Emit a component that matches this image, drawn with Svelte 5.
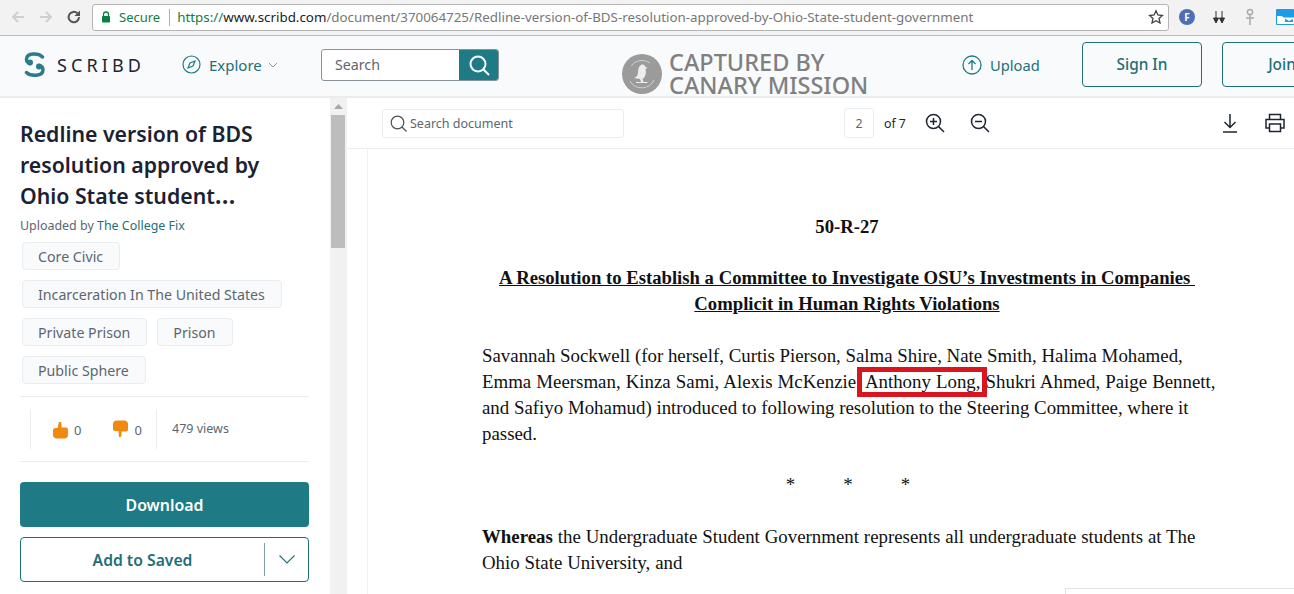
<script>
  const tagRows = [["Core Civic"], ["Incarceration In The United States"], ["Private Prison", "Prison"], ["Public Sphere"]];
</script>

<div class="screen">
  <div class="chrome">
    <svg class="nav" width="16" height="16" viewBox="0 0 16 16"><path d="M14 8H3M8 3L3 8l5 5" fill="none" stroke="#cfcfcf" stroke-width="2"/></svg>
    <svg class="nav" width="16" height="16" viewBox="0 0 16 16"><path d="M2 8h11M8 3l5 5-5 5" fill="none" stroke="#cfcfcf" stroke-width="2"/></svg>
    <svg class="nav" width="16" height="16" viewBox="0 0 16 16"><path d="M13 8a5.2 5.2 0 1 1-1.6-3.7" fill="none" stroke="#555" stroke-width="2"/><path d="M14 1.5V7H8.5z" fill="#555"/></svg>
    <div class="omni">
      <svg width="10" height="12" viewBox="0 0 10 12"><path d="M2.5 5V3.5a2.5 2.5 0 0 1 5 0V5" fill="none" stroke="#0b8043" stroke-width="1.3"/><rect x="1" y="5" width="8" height="6.5" rx=".8" fill="#0b8043"/></svg>
      <span class="secure">Secure</span>
      <span class="omni-sep"></span>
      <span class="url"><span class="https">https://</span><span class="host">www.scribd.com</span>/document/370064725/Redline-version-of-BDS-resolution-approved-by-Ohio-State-student-government</span>
      <svg class="star" width="16" height="16" viewBox="0 0 16 16"><path d="M8 1.8l1.900 4.200 4.500.5-3.400 3 1 4.500L8 11.700 4 14l1-4.500-3.400-3 4.500-.5z" fill="none" stroke="#444" stroke-width="1.3"/></svg>
    </div>
    <div class="ext">
      <span class="ext-f">F</span>
      <svg width="14" height="14" viewBox="0 0 14 14"><path d="M4 1v8M1.500 8L4 13l2.500-5zM10 1v8M7.500 8L10 13l2.500-5z" fill="#333" stroke="#333"/></svg>
      <svg width="12" height="18" viewBox="0 0 12 18"><circle cx="6" cy="4" r="2.600" fill="none" stroke="#aaa" stroke-width="1.500"/><path d="M6 7v10M2 10h8" stroke="#aaa" stroke-width="1.500"/></svg>
      <svg width="18" height="16" viewBox="0 0 18 16"><rect width="18" height="16" rx="1" fill="#1e9be6"/><path d="M1 7h5l1.500 1.500H18V15H1z" fill="#fff"/><path d="M9 9.500l4 2.500 4-2v3H9z" fill="#1e9be6"/></svg>
    </div>
  </div>

  <header class="topbar">
    <svg class="logo" width="21" height="25" viewBox="0 0 21 25"><g fill="none" stroke="#2a7d88" stroke-width="3.400" stroke-linecap="round"><path d="M18.500 5C14.500 1 3 .5 2.500 7c-.2 2.500 1.500 4 3.500 4.500"/><path d="M2.500 20.500C6.500 24.500 19 24.500 19 18c0-2.500-1.500-4-4-4.500"/></g><circle cx="6" cy="10.500" r="3" fill="#2a7d88"/><circle cx="15" cy="14.500" r="3" fill="#2a7d88"/></svg>
    <span class="wordmark">SCRIBD</span>
    <svg class="compass" width="19" height="19" viewBox="0 0 19 19"><circle cx="9.500" cy="9.500" r="8.500" fill="none" stroke="#1e7b85" stroke-width="1.200"/><path d="M13 6l-2 5-5 2 2-5z" fill="none" stroke="#1e7b85" stroke-width="1.200"/></svg>
    <span class="explore">Explore</span>
    <svg class="chev" width="10" height="6" viewBox="0 0 10 6"><path d="M1 1l4 4 4-4" fill="none" stroke="#8a9aa0"/></svg>
    <div class="search">
      <span class="search-field">Search</span>
      <span class="search-btn"><svg width="22" height="22" viewBox="0 0 22 22"><circle cx="10" cy="10" r="7.500" fill="none" stroke="#fff" stroke-width="2"/><path d="M15.500 15.500L21 21" stroke="#fff" stroke-width="2"/></svg></span>
    </div>
    <div class="canary">
      <svg width="40" height="40" viewBox="0 0 40 40"><circle cx="20" cy="20" r="20" fill="#9b9b9b"/><path d="M32 26a13.500 13.500 0 0 1-24 1M9 12a13.500 13.500 0 0 1 19-3" fill="none" stroke="#d0d0d0"/><path d="M19 11c2-1 4 0 4.500 2l2 1-2 1c1 4 0 8-3 10l1 3h4v1H14v-1h5l-1-3-6-1c3-1 4-3 4-6 0-3 1-6 3-7z" fill="#ececec"/></svg>
      <span class="canary-text">CAPTURED BY<br />CANARY MISSION</span>
    </div>
    <svg class="up" width="20" height="20" viewBox="0 0 20 20"><circle cx="10" cy="10" r="9" fill="none" stroke="#1e7b85" stroke-width="1.300"/><path d="M10 15V5.500M6.500 9L10 5.500 13.500 9" fill="none" stroke="#1e7b85" stroke-width="1.300"/></svg>
    <span class="upload">Upload</span>
    <span class="hbtn signin">Sign In</span>
    <span class="hbtn join">Join</span>
  </header>

  <div class="main">
    <aside class="side">
      <h1>Redline version of BDS resolution approved by Ohio State student<span class="ell">…</span></h1>
      <p class="by">Uploaded by <span class="author">The College Fix</span></p>
      <div class="tags">
        {#each tagRows as row}
          <div class="tag-row">
            {#each row as tag}<span class="tag">{tag}</span>{/each}
          </div>
        {/each}
      </div>
      <div class="stats">
        <div class="votes">
          <svg width="16" height="18" viewBox="0 0 16 18"><path d="M1 9c0-1 1-2 2-2h2.500L7 1c1.500-.5 2.500.5 2.500 2v3.500H14c1.500 0 2 1 2 2.500v5c0 2-1.500 3.500-3.500 3.500H5C2.500 17.500 1 16 1 14z" fill="#f0890f"/></svg>
          <span class="num">0</span>
          <svg class="down" width="16" height="18" viewBox="0 0 16 18"><path d="M1 9c0 1 1 2 2 2h3.500L7 17c1.500.5 2.500-.5 2.500-2v-3.500H14c1.500 0 2-1 2-2.500V4C16 2 14.500.5 12.500.5H5C2.500.5 1 2 1 4z" fill="#f0890f"/></svg>
          <span class="num">0</span>
        </div>
        <span class="views">479 views</span>
      </div>
      <div class="download">Download</div>
      <div class="saved">
        <span class="saved-label">Add to Saved</span>
        <span class="saved-chev"><svg width="16" height="9" viewBox="0 0 16 9"><path d="M.500.500L8 8l7.500-7.500" fill="none" stroke="#1e6f78" stroke-width="1.100"/></svg></span>
      </div>
    </aside>

    <div class="scrollbar">
      <svg class="arrow" width="9" height="5" viewBox="0 0 9 5"><path d="M4.500 0L9 5H0z" fill="#a8a8a8"/></svg>
      <span class="thumb"></span>
    </div>

    <section class="viewer">
      <div class="toolbar">
        <div class="doc-search">
          <svg width="17" height="17" viewBox="0 0 17 17"><circle cx="7.500" cy="7.500" r="6.300" fill="none" stroke="#4a5058" stroke-width="1.200"/><path d="M12 12l4.500 4.500" stroke="#4a5058" stroke-width="1.200"/></svg>
          <span>Search document</span>
        </div>
        <span class="page-input">2</span>
        <span class="of">of 7</span>
        <svg class="zoom-in" width="20" height="20" viewBox="0 0 20 20"><circle cx="8.500" cy="8.500" r="7" fill="none" stroke="#1e2430" stroke-width="1.500"/><path d="M13.500 13.500L19 19M5 8.500h7M8.500 5v7" stroke="#1e2430" stroke-width="1.500"/></svg>
        <svg class="zoom-out" width="20" height="20" viewBox="0 0 20 20"><circle cx="8.500" cy="8.500" r="7" fill="none" stroke="#1e2430" stroke-width="1.500"/><path d="M13.500 13.500L19 19M5 8.500h7" stroke="#1e2430" stroke-width="1.500"/></svg>
        <svg class="dl" width="16" height="20" viewBox="0 0 16 20"><path d="M8 1v13M2.500 9L8 14.500 13.500 9M1 19h14" fill="none" stroke="#1e2430" stroke-width="1.500"/></svg>
        <svg class="print" width="20" height="20" viewBox="0 0 20 20"><path d="M4.500 6V1.500h11V6M4.500 15H1V6.500h18V15h-3.500" fill="none" stroke="#1e2430" stroke-width="1.500"/><rect x="4.500" y="11" width="11" height="7.500" fill="none" stroke="#1e2430" stroke-width="1.500"/></svg>
      </div>
      <div class="pagewrap">
        <article class="page">
          <p class="code">50-R-27</p>
          <p class="res-title"><u>A Resolution to Establish a Committee to Investigate OSU’s Investments in Companies&nbsp;</u><br /><u>Complicit in Human Rights Violations</u></p>
          <p class="body">Savannah Sockwell (for herself, Curtis Pierson, Salma Shire, Nate Smith, Halima Mohamed,<br /><span class="wider">Emma Meersman, Kinza Sami, Alexis McKenzie. <span class="mark">Anthony Long,</span> Shukri Ahmed, Paige Bennett,</span><br />and Safiyo Mohamud) introduced to following resolution to the Steering Committee, where it<br />passed.</p>
          <p class="stars"><span>*</span><span>*</span><span>*</span></p>
          <p class="body whereas"><b>Whereas</b> the Undergraduate Student Government represents all undergraduate students at The<br />Ohio State University, and</p>
        </article>
        <span class="corner"></span>
      </div>
    </section>
  </div>
</div>

<style>
  :global(body) { margin: 0; background: #fff; }
  .screen {
    width: 1294px; height: 594px; overflow: hidden; display: flex; flex-direction: column;
    font-family: "Noto Sans", sans-serif; color: #1e2430;
  }
  .chrome {
    flex: none; height: 36px; box-sizing: border-box; display: flex; align-items: center;
    padding: 0 0 1px 10px; background: #f2f2f2; border-bottom: 1px solid #bdbdbd;
  }
  .chrome > svg { flex: none; }
  .chrome .nav { margin-right: 12px; }
  .chrome .nav:nth-child(3) { margin-right: 10px; }
  .omni {
    flex: none; width: 1077px; height: 27px; box-sizing: border-box; display: flex; align-items: center;
    padding: 0 4px 0 8px; background: #fff; border: 1px solid #b5b5b5; border-radius: 3px;
  }
  .secure { margin-left: 8px; font-size: 13px; color: #0b8043; }
  .omni-sep { width: 1px; height: 17px; margin: 0 7px 0 9px; background: #b0b0b0; }
  .url { flex: 1; font-size: 13.350px; color: #777; white-space: nowrap; overflow: hidden; }
  .https { color: #0b8043; }
  .host { color: #222; }
  .ext { flex: none; display: flex; align-items: center; margin-left: 10px; }
  .ext > * { flex: none; }
  .ext-f {
    width: 16px; height: 16px; border-radius: 50%; background: #4f6fb5; color: #fff; font-size: 10px; font-weight: 700;
    display: flex; align-items: center; justify-content: center;
  }
  .ext svg:nth-child(2) { margin-left: 17px; }
  .ext svg:nth-child(3) { margin-left: 18px; }
  .ext svg:nth-child(4) { margin-left: 20px; }

  .topbar {
    flex: none; height: 62px; box-sizing: border-box; display: flex; align-items: center;
    padding: 0 0 3px 24px; background: #f8fafb; border-bottom: 2px solid #e9edf0;
  }
  .topbar > * { flex: none; }
  .wordmark { margin-left: 12px; font-size: 18px; letter-spacing: 4.100px; color: #1e2430; width: 115px; }
  .compass { margin-left: 10px; }
  .explore { margin-left: 8px; font-size: 15px; color: #1e6f78; width: 59px; }
  .search {
    margin-left: 43px; width: 178px; height: 32px; box-sizing: border-box; display: flex;
    border: 1px solid #8a9299; border-radius: 3px; background: #fff; overflow: hidden;
  }
  .search-field { flex: 1; padding: 0 0 0 13px; line-height: 30px; font-size: 14.200px; color: #5d6670; }
  .search-btn { width: 39px; background: #1e7b85; display: flex; align-items: center; justify-content: center; }
  .canary { margin-left: 123px; margin-top: 19px; display: flex; align-items: center; height: 48px; }
  .canary-text { margin-left: 7px; font-size: 23.500px; line-height: 23.500px; font-weight: 500; color: #808080; white-space: nowrap; width: 293px; }
  .upload { margin-left: 8px; font-size: 14.700px; color: #1e6f78; width: 92px; }
  .hbtn {
    width: 120px; height: 45px; box-sizing: border-box; border: 1px solid #1e6f78; border-radius: 4px;
    display: flex; align-items: center; justify-content: center; font-size: 15.400px; font-weight: 500; color: #1e6f78;
  }
  .join { margin-left: 20px; }

  .main { flex: 1; min-height: 0; display: flex; }
  .side { flex: none; width: 330px; box-sizing: border-box; padding: 20px 21px 0 20px; }
  h1 { margin: 0; font-size: 21.250px; line-height: 31px; font-weight: 600; color: #1a2233; }
  .ell { font-size: 25px; line-height: 0; }
  .by { margin: 6px 0 0; font-size: 12.450px; line-height: 18px; color: #5d6670; }
  .author { color: #1e6f78; }
  .tags { margin: 7px 0 0 2px; display: flex; flex-direction: column; gap: 10px; }
  .tag-row { display: flex; gap: 10px; }
  .tag {
    height: 28px; box-sizing: border-box; padding: 0 16px 0 15px; display: flex; align-items: center;
    border: 1px solid #e9edf0; border-radius: 4px; background: #f8fafb; font-size: 14.200px; color: #5d6670;
  }
  .stats {
    margin-top: 12px; height: 66px; box-sizing: border-box; display: flex; align-items: center; padding-left: 10px;
    border-top: 1px solid #e9edf0; border-bottom: 1px solid #e9edf0;
  }
  .votes {
    width: 127px; height: 40px; box-sizing: border-box; display: flex; align-items: center; padding: 1px 0 0 21px;
    border-left: 1px solid #e9edf0; border-right: 1px solid #e9edf0;
  }
  .num { margin-left: 6px; font-size: 13px; color: #5d6670; }
  .down { margin-left: 31px; margin-top: -1px; }
  .views { margin-left: 15px; margin-bottom: 2px; font-size: 12.500px; color: #5d6670; }
  .download {
    margin-top: 20px; height: 45px; display: flex; align-items: center; justify-content: center; border-radius: 4px;
    background: #1e7b85; color: #fff; font-size: 15.900px; font-weight: 600;
  }
  .saved {
    margin-top: 10px; height: 45px; box-sizing: border-box; display: flex; align-items: center;
    border: 1px solid #1e6f78; border-radius: 4px; color: #1e6f78;
  }
  .saved-label { flex: 1; text-align: center; font-size: 15.700px; font-weight: 600; }
  .saved-chev { width: 43px; height: 33px; display: flex; align-items: center; justify-content: center; border-left: 1px solid #7e9ea3; }

  .scrollbar { flex: none; width: 17px; background: #f1f1f1; display: flex; flex-direction: column; align-items: center; border-right: 1px solid #eef0f1; box-sizing: border-box; }
  .arrow { margin-top: 6px; }
  .thumb { width: 14px; height: 133px; margin-top: 6px; background: #bdbdbd; }

  .viewer { flex: 1; min-width: 0; display: flex; flex-direction: column; }
  .toolbar {
    flex: none; height: 51px; box-sizing: border-box; display: flex; align-items: center; padding-left: 35px;
    border-bottom: 1px solid #e9edf0;
  }
  .toolbar > * { flex: none; }
  .doc-search {
    width: 242px; height: 29px; box-sizing: border-box; display: flex; align-items: center; gap: 3px; padding-left: 7px;
    border: 1px solid #e9edf0; border-radius: 3px; font-size: 12.500px; color: #5d6670;
  }
  .page-input {
    margin-left: 220px; width: 30px; height: 30px; box-sizing: border-box; display: flex; align-items: center; justify-content: center;
    border: 1px solid #e9edf0; border-radius: 3px; font-size: 12.300px; color: #5d6670;
  }
  .of { margin-left: 10px; width: 41px; font-size: 12.300px; color: #1e2430; white-space: nowrap; }
  .zoom-out { margin-left: 25px; }
  .dl { margin-left: 232px; }
  .print { margin-left: 27px; }

  .pagewrap { flex: 1; min-height: 0; margin-left: 20px; border-left: 1px solid #eef0f1; position: relative; overflow: hidden; }
  .page {
    width: 730px; margin-left: 114px; padding-top: 65px;
    font-family: "Liberation Serif", serif; font-size: 18.870px; line-height: 26px; color: #111;
  }
  .page p { margin: 0; white-space: nowrap; }
  .code { text-align: center; font-weight: 700; font-size: 18.700px; }
  .res-title { margin-top: 25px !important; text-align: center; font-weight: 700; font-size: 18.720px; }
  .body { margin-top: 26px !important; }
  .wider { word-spacing: .35px; }
  .mark { position: relative; }
  .mark::after {
    content: ""; position: absolute; left: -8px; right: -7px; top: -4px; bottom: -5px; border: 5px solid #d9161f; pointer-events: none;
  }
  .stars { margin-top: 25px !important; padding-left: 2px; display: flex; justify-content: center; gap: 48px; }
  .whereas { margin-top: 26px !important; word-spacing: .15px; }
  .corner { position: absolute; right: 0; bottom: 0; width: 229px; height: 6px; box-sizing: border-box; border-top: 1px solid #e2e2e2; border-left: 1px solid #e2e2e2; }
</style>
